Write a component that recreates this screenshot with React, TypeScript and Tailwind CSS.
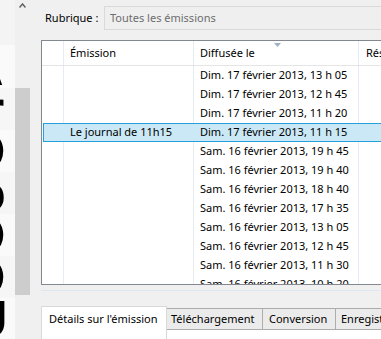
import React from 'react';

const font = { fontFamily: '"Segoe UI", "Noto Sans", sans-serif' };

const rows = [
  { name: '', date: 'Dim. 17 février 2013, 13 h 05' },
  { name: '', date: 'Dim. 17 février 2013, 12 h 45' },
  { name: '', date: 'Dim. 17 février 2013, 11 h 20' },
  { name: 'Le journal de 11h15', date: 'Dim. 17 février 2013, 11 h 15', selected: true },
  { name: '', date: 'Sam. 16 février 2013, 19 h 45' },
  { name: '', date: 'Sam. 16 février 2013, 19 h 40' },
  { name: '', date: 'Sam. 16 février 2013, 18 h 40' },
  { name: '', date: 'Sam. 16 février 2013, 17 h 35' },
  { name: '', date: 'Sam. 16 février 2013, 13 h 05' },
  { name: '', date: 'Sam. 16 février 2013, 12 h 45' },
  { name: '', date: 'Sam. 16 février 2013, 11 h 30' },
  { name: '', date: 'Sam. 16 février 2013, 10 h 20' },
];

// bits of the big list behind, cut off at the left edge of the window
const bands = [
  { h: 45, glyph: '', ml: 0, bg: 'bg-[#f4f4f4]' },
  { h: 43, glyph: 'A', ml: -34, bg: 'bg-[#fafafa]' },
  { h: 42, glyph: 'r', ml: -16, bg: 'bg-[#f6f6f6]' },
  { h: 42, glyph: 'O', ml: -35, bg: 'bg-[#fafafa]' },
  { h: 42, glyph: 'o', ml: -26, bg: 'bg-[#f6f6f6]' },
  { h: 42, glyph: 'O', ml: -35, bg: 'bg-[#fafafa]' },
  { h: 42, glyph: 'O', ml: -35, bg: 'bg-[#f6f6f6]' },
  { h: 41, glyph: 'U', ml: -30, bg: 'bg-[#fafafa]' },
];

export default function App() {
  return (
    <div className="flex w-[381px] h-[339px] overflow-hidden bg-[#f0f0f0] text-[11px] text-black" style={font}>
      {/* left strip */}
      <div className="flex flex-col w-[15px] shrink-0">
        {bands.map((b, i) => (
          <div key={i} className={`flex items-center overflow-hidden shrink-0 ${b.bg}`} style={{ height: b.h }}>
            <span
              className="shrink-0 text-[52px] font-bold leading-none text-black"
              style={{ fontFamily: '"Liberation Sans", sans-serif', marginLeft: b.ml }}
            >
              {b.glyph}
            </span>
          </div>
        ))}
      </div>

      {/* scrollbar */}
      <div className="flex flex-col w-[15px] shrink-0 bg-[#f0f0f0]">
        <div className="h-[17px] shrink-0 flex justify-center pt-[3px]">
          <svg width="7" height="5" viewBox="0 0 7 5">
            <path d="M0.5 4.5 L3.5 1 L6.5 4.5" fill="none" stroke="#606060" strokeWidth="1.5" />
          </svg>
        </div>
        <div className="h-[71px] shrink-0" />
        <div className="h-[207px] shrink-0 bg-[#cdcdcd]" />
      </div>

      {/* main */}
      <div className="flex flex-col flex-1 min-w-0 pl-[11px] overflow-hidden">
        <div className="flex items-center h-[40px] shrink-0 pb-[5px] pt-[1px]">
          <span className="w-[63px] pl-[4px] shrink-0 whitespace-nowrap">Rubrique :</span>
          <div className="flex items-center h-[24px] flex-1 -mr-[10px] border border-[#d9d9d9] bg-[#efefef] pl-[5px] text-[#6d6d6d] whitespace-nowrap">
            Toutes les émissions
          </div>
        </div>

        {/* list view */}
        <div className="flex flex-col h-[245px] shrink-0 -mr-[20px] border-l border-t border-b border-[#828790] bg-white overflow-hidden">
          <div className="relative flex h-[25px] shrink-0 border-b border-[#e5e5e5] whitespace-nowrap">
            <div className="w-[22px] shrink-0 border-r border-[#e5ecf4]" />
            <div className="w-[130px] shrink-0 border-r border-[#e5ecf4] pl-[6px] flex items-center">Émission</div>
            <div className="w-[165px] shrink-0 border-r border-[#e5ecf4] pl-[6px] flex items-center">Diffusée le</div>
            <div className="flex-1 pl-[7px] flex items-center">Résumé</div>
            <svg className="absolute left-[232px] top-[2px]" width="7" height="4" viewBox="0 0 7 4">
              <path d="M0 0 H7 L3.5 4 Z" fill="#9fb3c8" />
            </svg>
          </div>
          <div className="relative flex-1 overflow-hidden">
            <div className="absolute inset-0 flex pointer-events-none">
              <div className="w-[22px] shrink-0 border-r border-[#e5ecf4]" />
              <div className="w-[130px] shrink-0 border-r border-[#e5ecf4]" />
              <div className="w-[165px] shrink-0 border-r border-[#e5ecf4]" />
            </div>
            <div className="relative flex flex-col pl-[1px] whitespace-nowrap">
              {rows.map((r, i) => (
                <div
                  key={i}
                  className={`flex h-[19px] shrink-0 items-center border ${
                    r.selected ? 'bg-[#cbe8f6] border-[#26a0da]' : 'border-transparent'
                  }`}
                >
                  <div className="w-[20px] shrink-0" />
                  <div className="w-[130px] shrink-0 pl-[6px]">{r.name}</div>
                  <div className="w-[165px] shrink-0 pl-[6px]">{r.date}</div>
                </div>
              ))}
            </div>
          </div>
        </div>

        <div className="h-[11px] shrink-0 flex items-center">
          <div className="h-px flex-1 -mr-[10px] bg-[#dce7f2]" />
        </div>

        {/* tabs */}
        <div className="flex shrink-0 h-[43px] pt-[10px] whitespace-nowrap">
          <div className="w-[126px] shrink-0 border-l border-t border-r border-[#d9d9d9] bg-white pl-[7px] pt-[4px]">
            Détails sur l'émission
          </div>
          <div className="flex flex-col flex-1 min-w-0">
            <div className="flex h-[22px] shrink-0 mt-[2px]">
              <div className="w-[96px] shrink-0 border-t border-r border-b border-[#acacac] bg-[#ebebeb] pl-[4px] flex items-center">Téléchargement</div>
              <div className="w-[73px] shrink-0 border-t border-r border-b border-[#acacac] bg-[#ebebeb] pl-[6px] flex items-center">Conversion</div>
              <div className="w-[80px] shrink-0 border-t border-b border-[#acacac] bg-[#ebebeb] pl-[5px] flex items-center">Enregistrement</div>
            </div>
            <div className="flex-1 bg-white" />
          </div>
        </div>
      </div>
    </div>
  );
}
